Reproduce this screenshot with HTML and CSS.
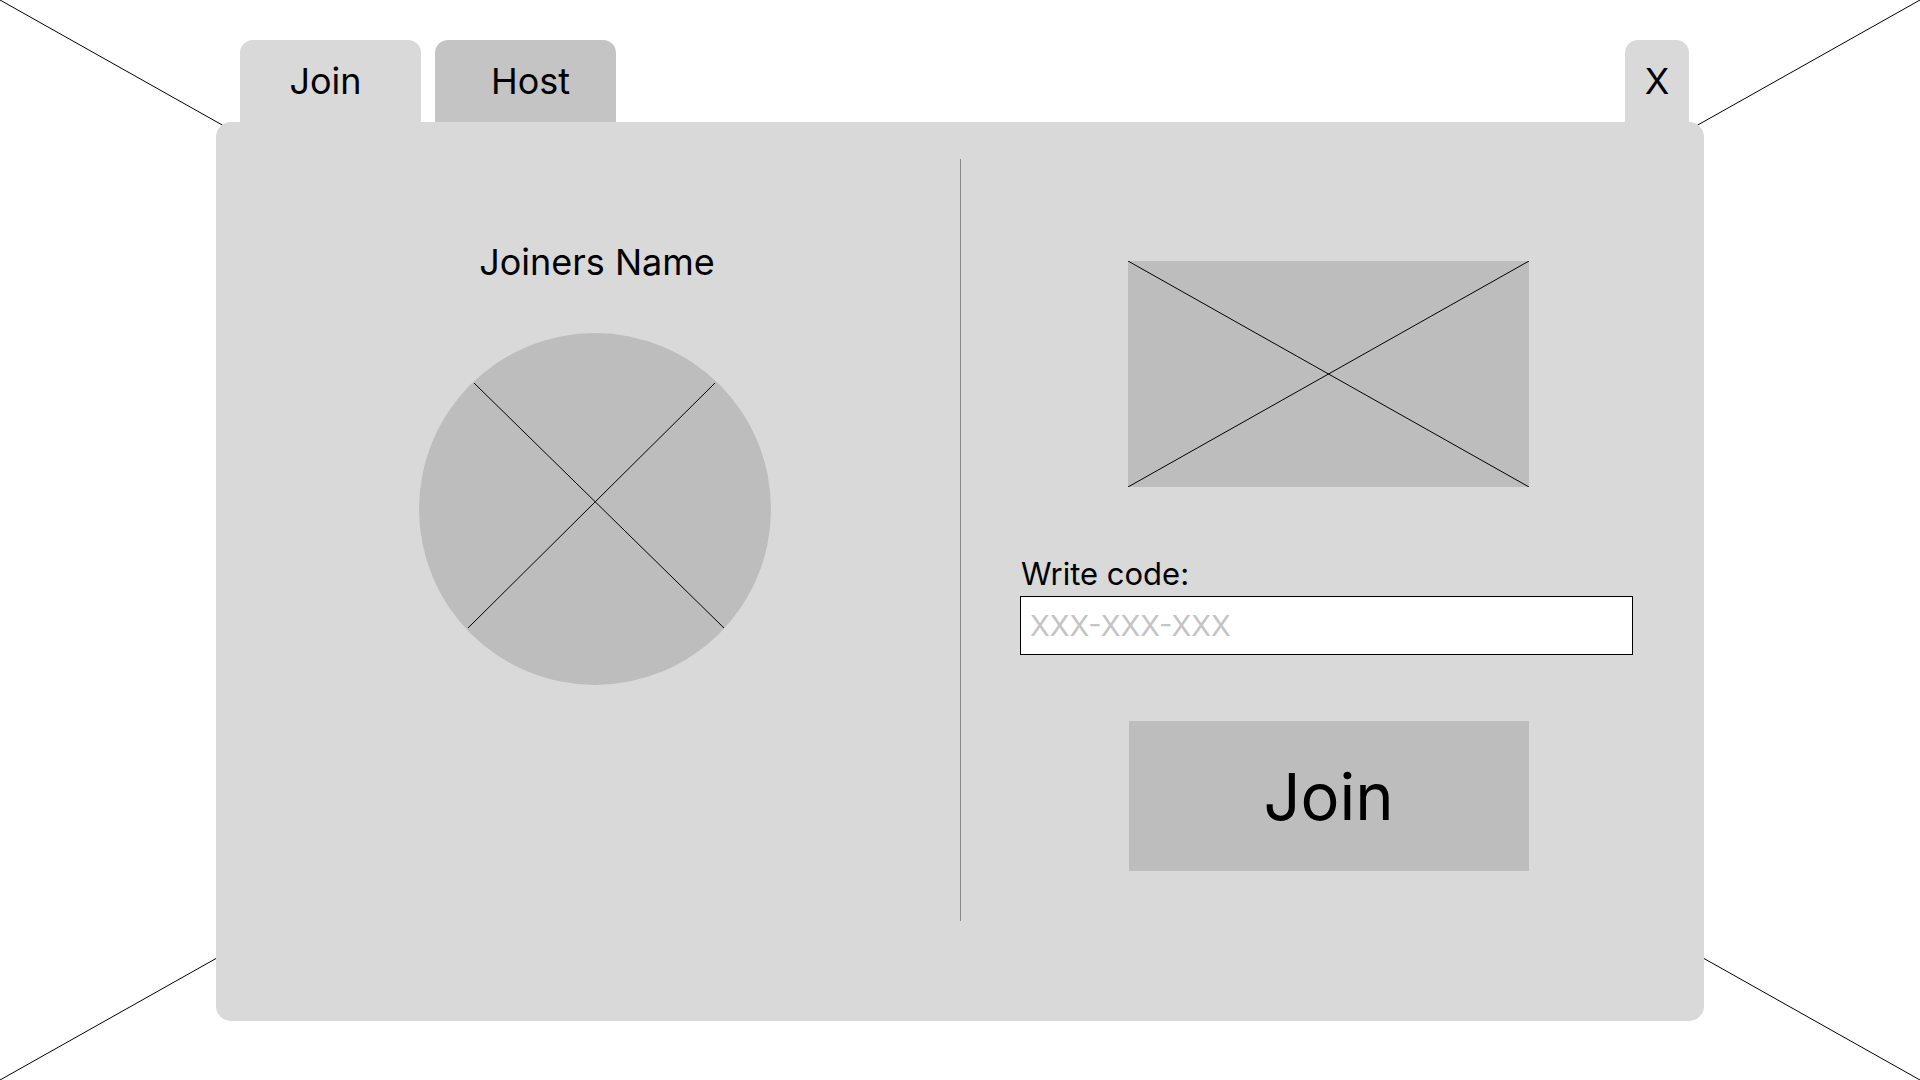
FILE: index.html
```html
<!DOCTYPE html>
<html lang="en">
<head>
<meta charset="utf-8">
<title>Join</title>
<link rel="stylesheet" href="styles.css">
</head>
<body>
<div class="stage">
  <svg class="backdrop" width="1920" height="1080" viewBox="0 0 1920 1080" aria-hidden="true">
    <line x1="0" y1="0" x2="1920" y2="1080" stroke="#000" stroke-width="1"/>
    <line x1="1920" y1="0" x2="0" y2="1080" stroke="#000" stroke-width="1"/>
  </svg>
  <div class="dialog">
    <div class="tabs">
      <div class="tab tab-active">Join</div>
      <div class="tab tab-inactive">Host</div>
      <div class="tab tab-close">X</div>
    </div>
    <div class="panel">
      <div class="col-left">
        <div class="joiner-name">Joiners Name</div>
        <svg class="avatar" width="352" height="352" viewBox="0 0 352 352" aria-hidden="true">
          <circle cx="176" cy="176" r="176" fill="#bdbdbd"/>
          <line x1="55" y1="50" x2="305" y2="295" stroke="#000" stroke-width="1"/>
          <line x1="296" y1="50" x2="49" y2="295" stroke="#000" stroke-width="1"/>
        </svg>
      </div>
      <div class="divider"></div>
      <div class="col-right">
        <svg class="picture" width="401" height="226" viewBox="0 0 401 226" aria-hidden="true">
          <rect x="0" y="0" width="401" height="226" fill="#bdbdbd"/>
          <line x1="0" y1="0" x2="401" y2="226" stroke="#000" stroke-width="1"/>
          <line x1="401" y1="0" x2="0" y2="226" stroke="#000" stroke-width="1"/>
        </svg>
        <div class="code-field">
          <label class="code-label" for="code">Write code:</label>
          <input class="code-input" id="code" type="text" placeholder="XXX-XXX-XXX">
        </div>
        <div class="join-button">Join</div>
      </div>
    </div>
  </div>
</div>
</body>
</html>
```
FILE: styles.css
```css
html, body {
  margin: 0;
  padding: 0;
  background: #ffffff;
}

body {
  font-family: Inter, "Noto Sans", "Liberation Sans", sans-serif;
  color: #000;
}

.stage {
  position: relative;
  width: 1920px;
  height: 1080px;
  overflow: hidden;
}

.backdrop {
  position: absolute;
  left: 0;
  top: 0;
  display: block;
}

.dialog {
  position: relative;
  padding: 40px 216px 0 216px;
  display: flex;
  flex-direction: column;
}

.tabs {
  display: flex;
  gap: 14px;
  padding-left: 24px;
  padding-right: 15px;
}

.tab {
  height: 82px;
  box-sizing: border-box;
  padding-top: 19px;
  border-radius: 13px 13px 0 0;
  font-size: 36px;
  line-height: normal;
  text-align: center;
}

.tab-active {
  width: 181px;
  background: #d9d9d9;
  padding-right: 10px;
}

.tab-inactive {
  width: 181px;
  background: #c4c4c4;
  padding-left: 10px;
}

.tab-close {
  width: 64px;
  margin-left: auto;
  background: #d9d9d9;
}

.panel {
  height: 899px;
  background: #d9d9d9;
  border-radius: 15px;
  display: flex;
}

.col-left {
  width: 744px;
  box-sizing: border-box;
  padding-top: 118px;
  padding-left: 14px;
  display: flex;
  flex-direction: column;
  align-items: center;
}

.joiner-name {
  font-size: 36px;
  line-height: normal;
  margin-left: 4px;
}

.avatar {
  display: block;
  margin-top: 49px;
}

.divider {
  width: 1px;
  height: 762px;
  margin-top: 37px;
  background: #8a8a8a;
}

.col-right {
  flex: 1;
  box-sizing: border-box;
  padding-top: 139px;
  padding-right: 8px;
  display: flex;
  flex-direction: column;
  align-items: center;
}

.picture {
  display: block;
}

.code-field {
  width: 613px;
  margin-top: 68px;
  margin-right: 4px;
  display: flex;
  flex-direction: column;
}

.code-label {
  font-size: 31px;
  line-height: normal;
  padding-left: 1px;
}

.code-input {
  margin-top: 4px;
  height: 59px;
  box-sizing: border-box;
  border: 1.5px solid #000;
  border-radius: 0;
  background: #fff;
  padding: 0 9px;
  font-family: Inter, "Noto Sans", "Liberation Sans", sans-serif;
  font-size: 29px;
  color: #000;
  outline: none;
}

.code-input::placeholder {
  color: #c4c4c4;
  opacity: 1;
}

.join-button {
  margin-top: 66px;
  width: 400px;
  height: 150px;
  background: #bdbdbd;
  display: flex;
  align-items: center;
  justify-content: center;
  font-size: 65px;
  line-height: 1;
}
```
